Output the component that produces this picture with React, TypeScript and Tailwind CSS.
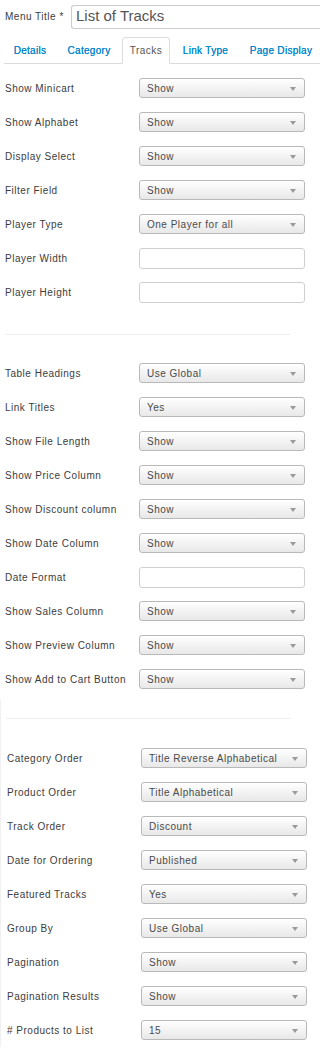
import React from "react";

type Row = { label: string; value?: string; input?: boolean };

const sec1: Row[] = [
  { label: "Show Minicart", value: "Show" },
  { label: "Show Alphabet", value: "Show" },
  { label: "Display Select", value: "Show" },
  { label: "Filter Field", value: "Show" },
  { label: "Player Type", value: "One Player for all" },
  { label: "Player Width", input: true },
  { label: "Player Height", input: true },
];

const sec2: Row[] = [
  { label: "Table Headings", value: "Use Global" },
  { label: "Link Titles", value: "Yes" },
  { label: "Show File Length", value: "Show" },
  { label: "Show Price Column", value: "Show" },
  { label: "Show Discount column", value: "Show" },
  { label: "Show Date Column", value: "Show" },
  { label: "Date Format", input: true },
  { label: "Show Sales Column", value: "Show" },
  { label: "Show Preview Column", value: "Show" },
  { label: "Show Add to Cart Button", value: "Show" },
];

const sec3: Row[] = [
  { label: "Category Order", value: "Title Reverse Alphabetical" },
  { label: "Product Order", value: "Title Alphabetical" },
  { label: "Track Order", value: "Discount" },
  { label: "Date for Ordering", value: "Published" },
  { label: "Featured Tracks", value: "Yes" },
  { label: "Group By", value: "Use Global" },
  { label: "Pagination", value: "Show" },
  { label: "Pagination Results", value: "Show" },
  { label: "# Products to List", value: "15" },
];

function Field({ row }: { row: Row }) {
  return (
    <div className="flex h-[34px] items-center">
      <div className="w-[134px] shrink-0 whitespace-nowrap text-[10px] tracking-[0.5px] text-[#3c3c3c]">{row.label}</div>
      {row.input ? (
        <div className="h-[21px] w-[166px] rounded-[3px] border border-[#cfcfcf] bg-white" />
      ) : (
        <div className="flex h-[20px] w-[166px] items-center justify-between rounded-[3px] border border-[#b9b9b9] bg-gradient-to-b from-white to-[#e8e8e8] pl-[7px] pr-[8px] shadow-[inset_0_1px_0_#fff]">
          <span className="whitespace-nowrap text-[10px] tracking-[0.5px] text-[#4a4a4a]">{row.value}</span>
          <svg width="6" height="4" viewBox="0 0 6 4" className="mt-[1px]">
            <polygon points="0,0 6,0 3,4" fill="#9a9a9a" />
          </svg>
        </div>
      )}
    </div>
  );
}

const tabs: { t: string; w: string }[] = [
  { t: "Details", w: "w-[52px]" },
  { t: "Category", w: "w-[66px]" },
  { t: "Tracks", w: "w-[48px]" },
  { t: "Link Type", w: "w-[71px]" },
  { t: "Page Display", w: "w-[80px]" },
];

export default function App() {
  return (
    <div className="w-[320px] h-[1050px] overflow-hidden bg-white font-['Liberation_Sans',Arial,sans-serif]">
      {/* header */}
      <div className="flex h-[33px] items-center">
        <div className="w-[71px] shrink-0 whitespace-nowrap pl-[5px] text-[10px] tracking-[0.5px] text-[#3c3c3c]">Menu Title *</div>
        <div className="flex h-[24px] flex-1 items-center rounded-l-[3px] border border-r-0 border-[#cccccc] pl-[4px] text-[15px] text-[#555]">
          List of Tracks
        </div>
      </div>
      {/* tabs */}
      <div className="ml-[4px] mt-[5px] flex h-[26px] items-end border-b border-[#dddddd]">
        {tabs.map(({ t, w }) =>
          t === "Tracks" ? (
            <div
              key={t}
              className={`-mb-[1px] flex h-[27px] shrink-0 items-center justify-center rounded-t-[4px] border border-b-white border-[#dddddd] bg-white text-[10px] tracking-[0.5px] text-[#555] ${w}`}
            >
              {t}
            </div>
          ) : (
            <div
              key={t}
              className={`flex h-[26px] shrink-0 items-center justify-center whitespace-nowrap text-[10px] tracking-[0.3px] text-[#0a88cc] [text-shadow:0_0_0.4px_#0a88cc] ${w}`}
            >
              {t}
            </div>
          )
        )}
      </div>
      {/* section 1 */}
      <div className="pl-[5px] pt-[7px]">
        {sec1.map((r) => (
          <Field key={r.label} row={r} />
        ))}
      </div>
      <div className="ml-[5px] mt-[25px] h-[1px] w-[285px] bg-[#eeeeee]" />
      <div className="pl-[5px] pt-[21px]">
        {sec2.map((r) => (
          <Field key={r.label} row={r} />
        ))}
      </div>
      <div className="mt-[4px] border-l border-[#f0f0f0] pt-[18px]">
        <div className="ml-[5px] h-[1px] w-[285px] bg-[#eeeeee]" />
        <div className="pl-[6px] pt-[22px]">
          {sec3.map((r) => (
            <Field key={r.label} row={r} />
          ))}
        </div>
      </div>
    </div>
  );
}
